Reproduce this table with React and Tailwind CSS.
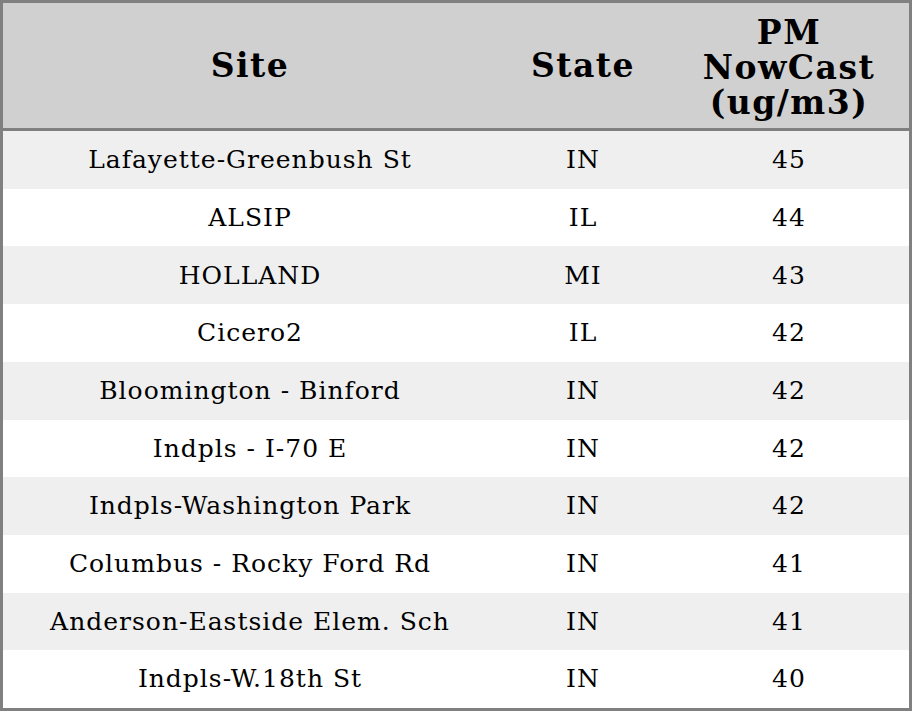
const rows = [
  ["Lafayette-Greenbush St", "IN", "45"],
  ["ALSIP", "IL", "44"],
  ["HOLLAND", "MI", "43"],
  ["Cicero2", "IL", "42"],
  ["Bloomington - Binford", "IN", "42"],
  ["Indpls - I-70 E", "IN", "42"],
  ["Indpls-Washington Park", "IN", "42"],
  ["Columbus - Rocky Ford Rd", "IN", "41"],
  ["Anderson-Eastside Elem. Sch", "IN", "41"],
  ["Indpls-W.18th St", "IN", "40"],
];

export default function App() {
  return (
    <div
      className="w-[912px] h-[711px] border-[3px] border-[#808080] bg-white flex flex-col text-black"
      style={{ fontFamily: '"DejaVu Serif", serif' }}
    >
      <div className="h-[125px] shrink-0 bg-[#d0d0d0] flex items-center border-b-[3px] border-[#808080] box-content font-bold text-[33px] leading-[35px] tracking-[1.5px] text-center">
        <div className="w-[494px]">Site</div>
        <div className="w-[172px]">State</div>
        <div className="flex-1 flex flex-col pt-[3px]">
          <div className="h-[35px]">PM</div>
          <div className="h-[35px]">NowCast</div>
          <div className="h-[35px]">(ug/m3)</div>
        </div>
      </div>
      {rows.map((r, i) => (
        <div
          key={i}
          className={`flex-1 flex items-center text-[25px] tracking-[1px] text-center ${i % 2 === 0 ? "bg-[#efefef]" : "bg-white"}`}
        >
          <div className="w-[494px]">{r[0]}</div>
          <div className="w-[172px]">{r[1]}</div>
          <div className="flex-1">{r[2]}</div>
        </div>
      ))}
    </div>
  );
}
